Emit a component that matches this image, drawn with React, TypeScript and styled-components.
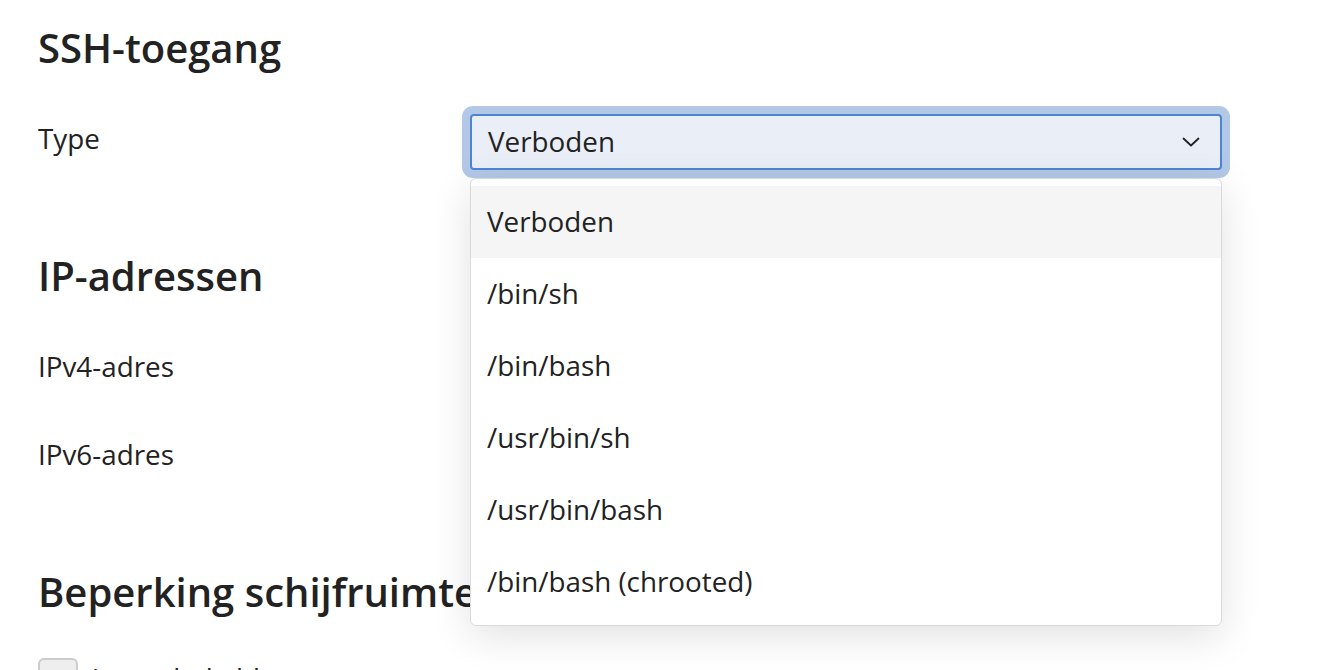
import React from "react";
import styled, { createGlobalStyle } from "styled-components";

const options = [
    "Verboden",
    "/bin/sh",
    "/bin/bash",
    "/usr/bin/sh",
    "/usr/bin/bash",
    "/bin/bash (chrooted)",
];

export default function App() {
    const selected = "Verboden";

    return (
        <Page>
            <GlobalStyle />
            <Section>
                <Heading>SSH-toegang</Heading>
                <Row>
                    <Label>Type</Label>
                    <SelectWrap>
                        <SelectBox>
                            <span>{selected}</span>
                            <svg width="18" height="10" viewBox="0 0 18 10">
                                <path
                                    d="M1.5 1.5 L9 8.5 L16.5 1.5"
                                    fill="none"
                                    stroke="#222"
                                    strokeWidth="1.8"
                                    strokeLinecap="round"
                                    strokeLinejoin="round"
                                />
                            </svg>
                        </SelectBox>
                        <Menu>
                            {options.map((o) => (
                                <Option key={o} $active={o === selected}>
                                    {o}
                                </Option>
                            ))}
                        </Menu>
                    </SelectWrap>
                </Row>
            </Section>

            <Section>
                <Heading>IP-adressen</Heading>
                <Rows>
                    <Row>
                        <Label>IPv4-adres</Label>
                        <Field />
                    </Row>
                    <Row>
                        <Label>IPv6-adres</Label>
                        <Field />
                    </Row>
                </Rows>
            </Section>

            <Section>
                <Heading>Beperking schijfruimte</Heading>
                <CheckRow>
                    <Checkbox />
                    <CheckLabel>ingeschakeld</CheckLabel>
                </CheckRow>
            </Section>
        </Page>
    );
}

const GlobalStyle = createGlobalStyle`
    html, body {
        margin: 0;
        padding: 0;
        background: #ffffff;
        overflow: hidden;
    }
    body {
        font-family: "Open Sans", "Noto Sans", sans-serif;
        color: #222222;
    }
`;

const Page = styled.div`
    padding: 24px 0 0 38px;
`;

const Section = styled.section`
    margin-bottom: 82px;
`;

const Heading = styled.h2`
    margin: 0 0 42px;
    font-size: 40px;
    line-height: 48px;
    font-weight: 600;
    color: #222222;
`;

const Rows = styled.div`
    display: flex;
    flex-direction: column;
    gap: 32px;
`;

const Row = styled.div`
    display: grid;
    grid-template-columns: 432px 752px;
    align-items: start;
`;

const Label = styled.div`
    padding-top: 4px;
    font-size: 27.8px;
    line-height: 40px;
`;

const Field = styled.div`
    height: 56px;
    border: 2px solid #cfcfcf;
    border-radius: 6px;
    box-sizing: border-box;
`;

const SelectWrap = styled.div`
    position: relative;
`;

const SelectBox = styled.div`
    height: 56px;
    box-sizing: border-box;
    display: flex;
    align-items: center;
    justify-content: space-between;
    padding: 0 20px 2px 16px;
    font-size: 27.8px;
    background: #eaeef6;
    border: 2px solid #4c86d3;
    border-radius: 4px;
    box-shadow: 0 0 0 8px #b2c8e6;

    svg {
        margin-top: 2px;
    }
`;

const Menu = styled.div`
    position: absolute;
    top: 64px;
    left: 0;
    right: 0;
    z-index: 2;
    padding: 7px 0;
    background: #ffffff;
    border: 1px solid #dadada;
    border-radius: 6px;
    box-shadow: 0 10px 40px rgba(0, 0, 0, 0.12);
`;

const Option = styled.div<{ $active?: boolean }>`
    height: 72px;
    display: flex;
    align-items: center;
    padding: 0 0 2px 16px;
    box-sizing: border-box;
    font-size: 27.8px;
    background: ${(p) => (p.$active ? "#f5f5f5" : "transparent")};
`;

const CheckRow = styled.div`
    display: flex;
    align-items: center;
    gap: 14px;
`;

const Checkbox = styled.div`
    width: 40px;
    height: 40px;
    box-sizing: border-box;
    border: 2px solid #cccccc;
    border-radius: 6px;
    background: #eeeeee;
`;

const CheckLabel = styled.span`
    font-size: 27.8px;
    line-height: 40px;
`;
